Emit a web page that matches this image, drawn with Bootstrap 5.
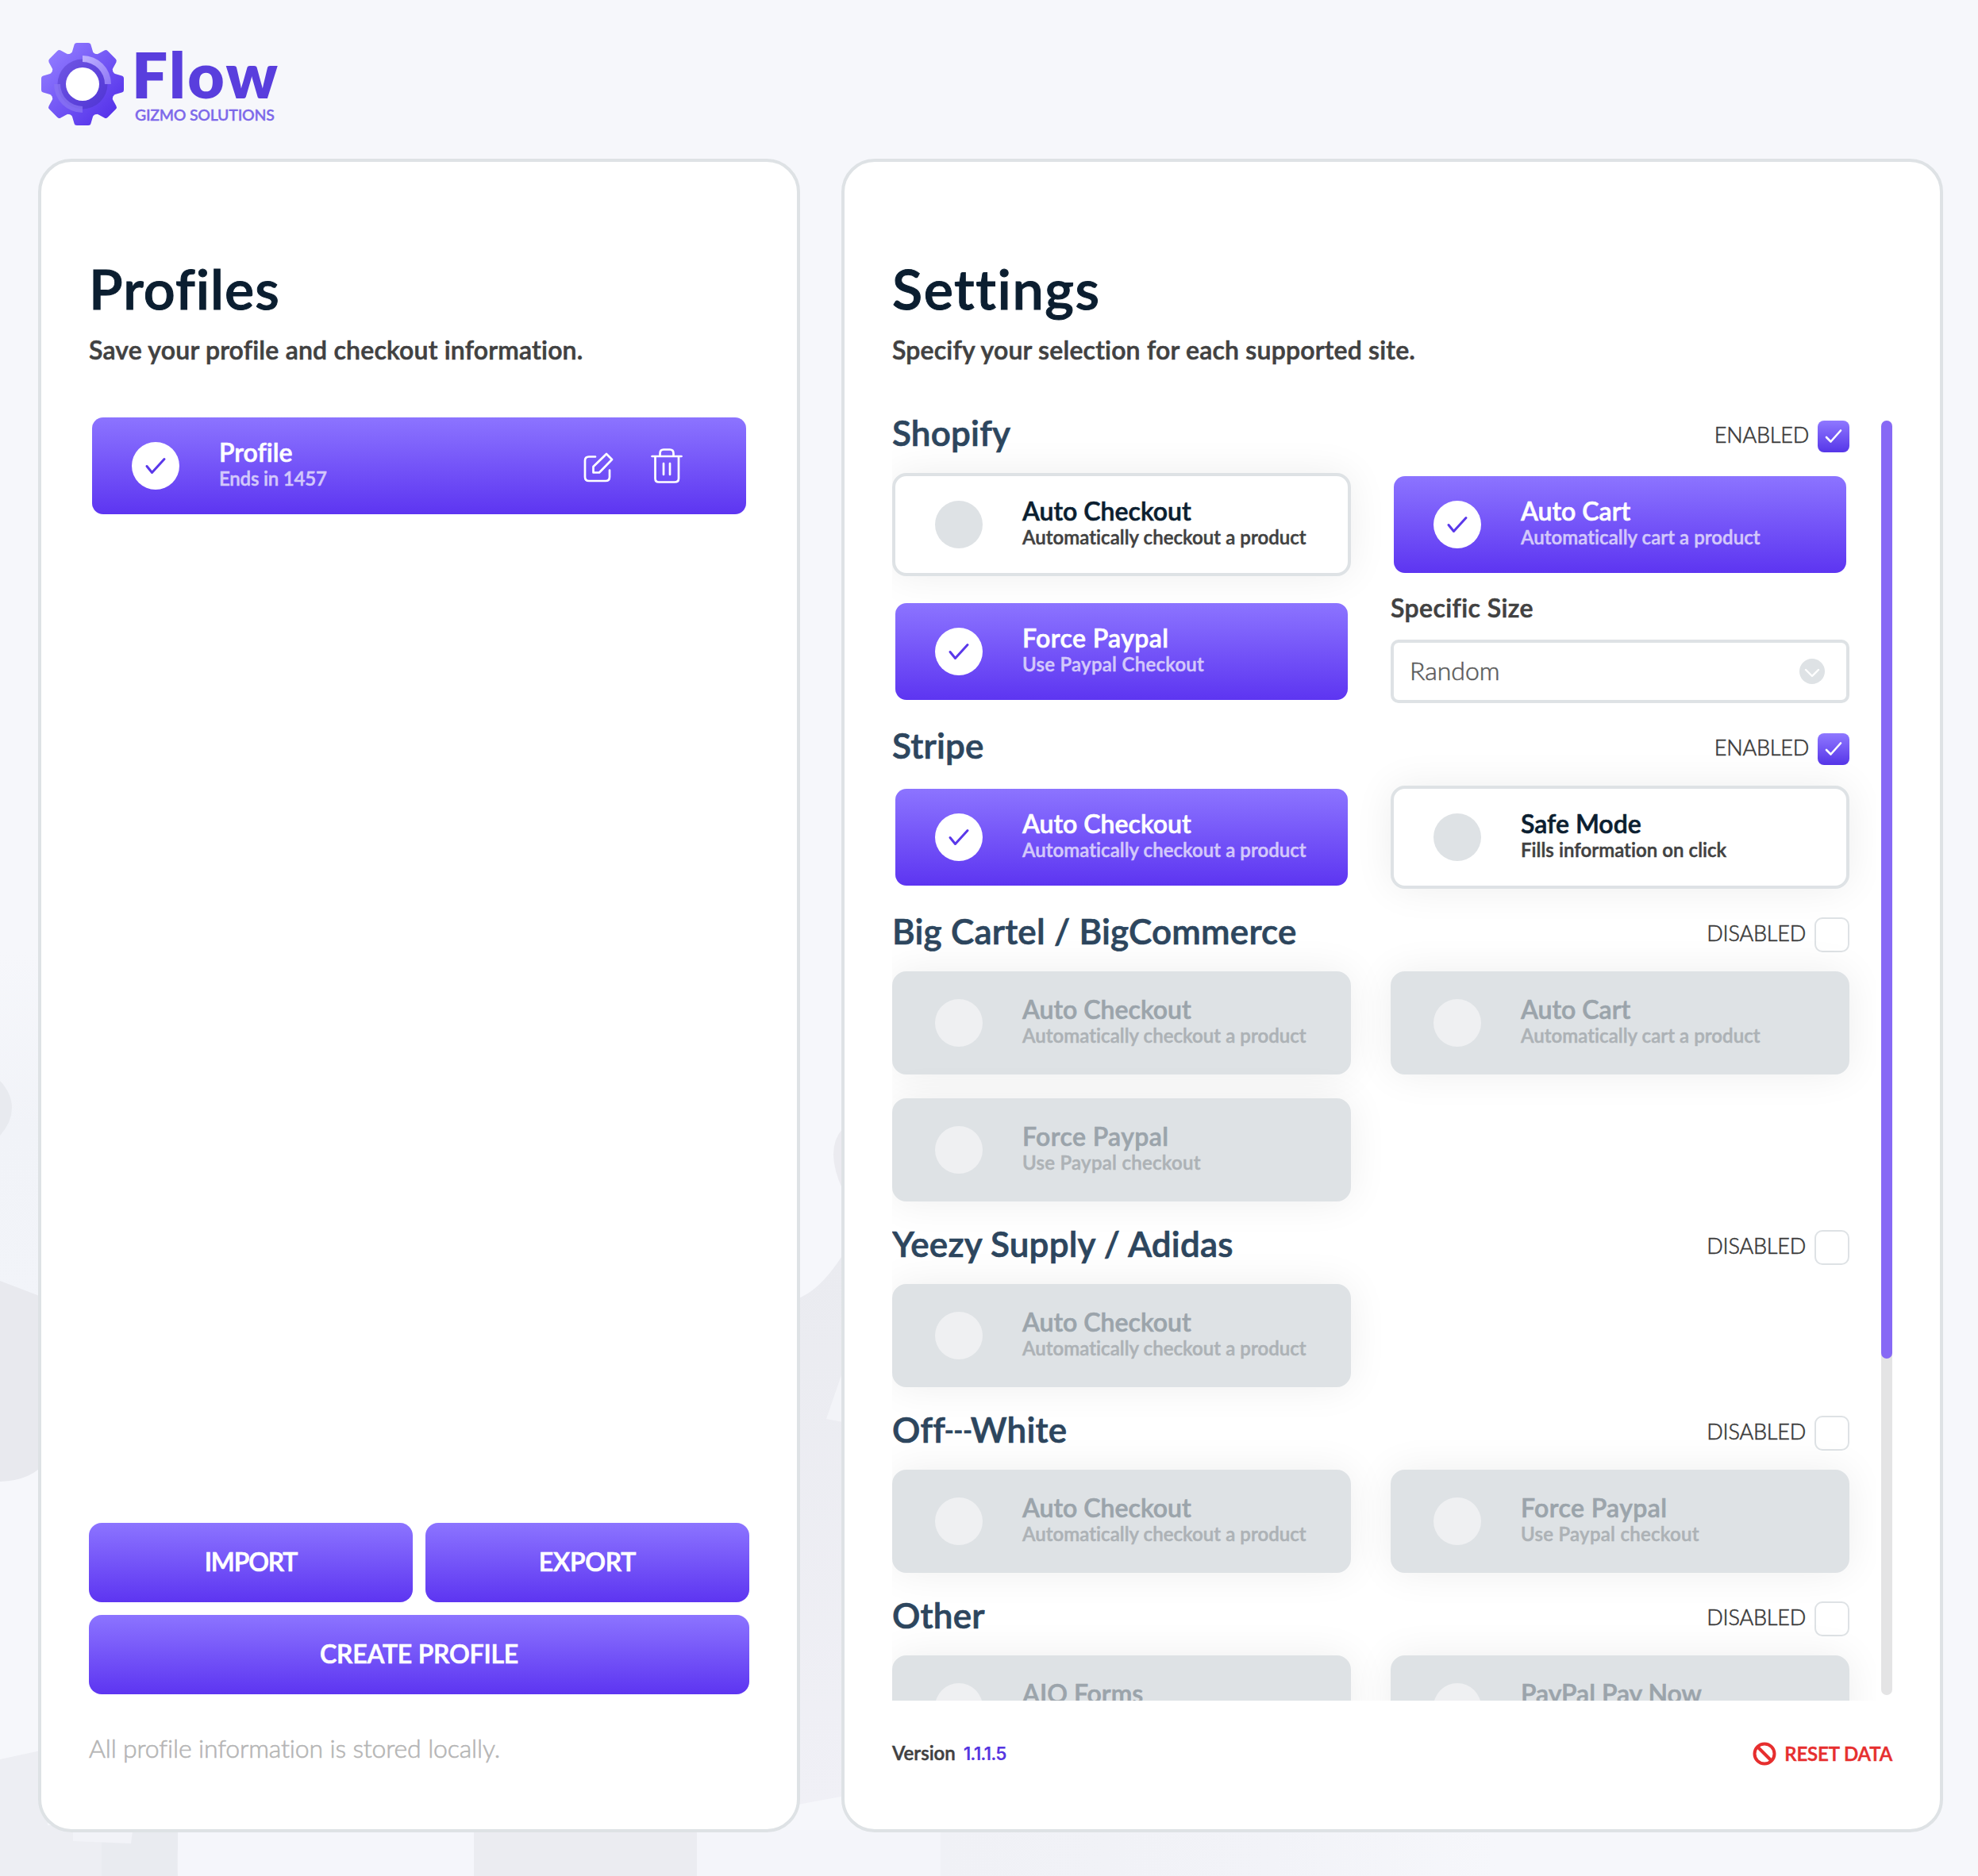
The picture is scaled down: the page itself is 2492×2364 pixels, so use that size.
<!DOCTYPE html>
<html lang="en">
<head>
<meta charset="utf-8">
<title>Flow</title>
<link href="https://cdn.jsdelivr.net/npm/bootstrap@5.3.0/dist/css/bootstrap.min.css" rel="stylesheet">
<style>
body{font-family:Lato,sans-serif;font-variant-ligatures:none;background:#f6f7fb;color:#414141;width:2492px;height:2364px;overflow:hidden;position:relative}
.backdrop{position:absolute;left:0;top:0;z-index:-1}
.brand-bar{height:200px;padding:50px 0 0 48px}
.gear{width:112px;height:112px}
.brand-name{font-size:80px;line-height:74px;font-weight:800;color:#593edd;letter-spacing:2.4px;margin:6px 0 0 6px}
.brand-sub{font-size:19.5px;line-height:20px;font-weight:600;color:#7d68ea;letter-spacing:-.25px;margin:5px 0 0 10px;-webkit-text-stroke:.3px #7d68ea}
.panels{padding:0 44px 0 48px;gap:52px}
.panel{background:#fff;border:4px solid #dee2e5;border-radius:42px;height:2109px;padding:0 60px}
.panel-l{width:960px}
.panel-r{width:1388px}
.panel-title{font-size:70px;line-height:72px;font-weight:600;color:#0b1e30;margin:123px 0 0;letter-spacing:1.6px;-webkit-text-stroke:1px}
.panel-l .panel-title{letter-spacing:1px}
.panel-text{font-size:32px;line-height:40px;font-weight:600;margin:22px 0 0;letter-spacing:.2px;-webkit-text-stroke:.6px}
.option{height:130px;border:4px solid #dee2e5;border-radius:18px;background:#fff;padding:0 50px 0 50px;box-shadow:0 0 50px rgba(0,0,0,.07);margin-bottom:30px;position:relative}
.option .dot{width:60px;height:60px;border-radius:50%;background:#dee2e5;flex:none;margin-right:50px}
.option .dot svg{display:block}
.option .copy{padding-bottom:5px;white-space:nowrap}
.option .name{font-size:32px;line-height:32px;font-weight:600;color:#0b1e30;-webkit-text-stroke:.6px}
.option .note{font-size:24px;line-height:24px;min-height:24px;font-weight:600;color:#414141;margin-top:5px;letter-spacing:.06px;-webkit-text-stroke:.5px}
.option.paypal .name{letter-spacing:.4px}
.option.paypal .note{letter-spacing:.28px}
.option.on{border-color:transparent;background:linear-gradient(#8c74ff,#5d35f1) padding-box;box-shadow:none}
.option.on .dot{background:#fff}
.option.on .name{color:#fff}
.option.on .note{color:#d3c8fb}
.option.off{background:#dee2e5}
.option.off .dot{background:#eff0f2}
.option.off .name{color:#9ba4ab}
.option.off .note{color:#adb2b6}
.profile-card{margin:61px 0 0}
.profile-card .note{letter-spacing:-.2px}
.profile-card .tools{gap:45px;padding-right:29px}
.grad-btn{height:100px;border:0;border-radius:16px;background:linear-gradient(#8c74ff,#5d35f1);color:#fff;font-size:32px;line-height:32px;font-weight:600;padding:0 0 3px;-webkit-text-stroke:.7px}
.grad-btn:hover{color:#fff}
.btn-stack{margin-top:1267px;gap:16px}
.tight{letter-spacing:-1.1px}
.snug{letter-spacing:-.2px}
.hint{font-size:32px;line-height:40px;font-weight:300;color:#b5b5b5;margin-top:48px;letter-spacing:-.15px;-webkit-text-stroke:.6px #b5b5b5}
.settings-view{height:1643px;margin:39px 0 0;overflow:hidden}
.scroll-body{width:1240px;height:1643px;overflow:hidden;padding:30px 34px 0 0}
.site{padding-bottom:8px}
.site-head{height:66px}
.site-name{font-size:44px;line-height:40px;font-weight:600;color:#2d465e;margin:-5px 0 0;letter-spacing:.2px;-webkit-text-stroke:.7px}
.dashes{display:inline-block;font-size:31px;font-weight:700;line-height:30px;letter-spacing:0;vertical-align:4px;margin:0 -2px 0 -1px}
.site-col{width:578px}
.site-cols{gap:50px}
.state{font-size:27px;line-height:28px;font-weight:300;color:#333;letter-spacing:-.2px;margin:4px 11px 0 0;-webkit-text-stroke:.6px #414141}
.tick{width:40px;height:40px;border-radius:8px;background:linear-gradient(#8f78ff,#5636e8)}
.tick svg{display:block}
.tick.empty{width:44px;height:44px;border:2px solid #dee2e5;border-radius:10px;background:#fff;margin-top:-2px}
.size-label{font-size:32px;line-height:32px;font-weight:600;letter-spacing:.4px;margin:-6px 0 24px;-webkit-text-stroke:.6px}
.size-box{height:80px;border:4px solid #dee2e5;border-radius:10px;background:#fff;font-size:32px;font-weight:300;color:#555;padding:0 27px 0 20px;-webkit-text-stroke:.6px #666}
.size-box span{margin-top:-3px}
.track{width:14px;height:1606px;margin-top:30px;border-radius:7px;background:#e4e4e5}
.thumb{height:1182px;border-radius:7px;background:#8769f5}
.foot{font-size:24px;line-height:30px;font-weight:600;margin-top:51px;-webkit-text-stroke:.5px}
.ver{font-family:Inter,sans-serif;font-size:22.5px;-webkit-text-stroke:0;color:#5636e0;letter-spacing:-.9px;margin-left:10px}
.reset{color:#e62e2e;letter-spacing:-.15px}
.reset svg{margin-right:10px}
</style>
</head>
<body>
<svg class="backdrop" width="2492" height="2364" viewBox="0 0 2492 2364">
<defs>
<linearGradient id="b1" x1="0" y1="0" x2="0" y2="1"><stop offset="0" stop-color="#f6f7fb"/><stop offset=".5" stop-color="#f1f3f8"/><stop offset="1" stop-color="#f2f4f9"/></linearGradient>
<linearGradient id="b2" x1="0" y1="0" x2="0" y2="1"><stop offset="0" stop-color="#eaebf0"/><stop offset="1" stop-color="#f0f0f6"/></linearGradient>
<linearGradient id="b3" x1="0" y1="0" x2="1" y2="0"><stop offset="0" stop-color="#f0f1f6"/><stop offset=".6" stop-color="#f2f3f8"/><stop offset="1" stop-color="#f6f7fb"/></linearGradient>
</defs>
<rect y="1200" width="60" height="450" fill="url(#b1)"/>
<path d="M0 1362Q15 1378 15 1396T0 1431Z" fill="#e8eaef"/>
<path d="M0 1614L60 1637V1840Q40 1866 0 1867Z" fill="#e8e9ee"/>
<path d="M0 2217L60 2204V2300H224V2364H0Z" fill="#edeef3"/>
<path d="M1000 1638Q1030 1630 1060 1584H1070V2262L1000 2275Z" fill="url(#b2)"/>
<path d="M1062 1422Q1038 1448 1062 1500Z" fill="#ebebf0"/>
<path d="M1062 1727L1041 1788L1062 1792Z" fill="#f3f4f8"/>
<path d="M128 2300H230Q220 2335 224 2364H128Z" fill="#e9ebf0"/>
<path d="M92 2300H168L165 2323L92 2320Z" fill="#f2f3f8"/>
<rect x="224" y="2300" width="373" height="64" fill="#f5f6fb"/>
<rect x="597" y="2300" width="281" height="64" fill="#ebecf1"/>
<rect x="878" y="2306" width="307" height="58" fill="#f4f5fa"/>
<rect x="1185" y="2300" width="700" height="64" fill="url(#b3)"/>
</svg>

<header class="brand-bar d-flex align-items-start">
<svg class="gear" viewBox="-56 -56 112 112">
<defs>
<linearGradient id="g" gradientUnits="userSpaceOnUse" x1="-38" y1="-38" x2="38" y2="38"><stop offset="0" stop-color="#8f79ff"/><stop offset="1" stop-color="#5633ea"/></linearGradient>
<linearGradient id="r" x1="0" y1="0" x2="1" y2="1"><stop offset="0" stop-color="#7057e4"/><stop offset="1" stop-color="#4f34d4"/></linearGradient>
<linearGradient id="a" x1="0" y1="0" x2="1" y2="1"><stop offset="0" stop-color="#c0b2ff"/><stop offset="1" stop-color="#8f78f6"/></linearGradient>
<path id="t" d="M-18-28V-38Q-14-38-13-41L-10.5-49.500Q-10-52-7-52H7Q10-52 10.500-49.500L13-41Q14-38 18-38V-28Z"/>
<clipPath id="c"><circle r="40.500"/><use href="#t"/><use href="#t" transform="rotate(45)"/><use href="#t" transform="rotate(90)"/><use href="#t" transform="rotate(135)"/><use href="#t" transform="rotate(180)"/><use href="#t" transform="rotate(225)"/><use href="#t" transform="rotate(270)"/><use href="#t" transform="rotate(315)"/></clipPath>
</defs>
<rect x="-56" y="-56" width="112" height="112" fill="url(#g)" clip-path="url(#c)"/>
<circle r="31.500" fill="url(#r)"/>
<path d="M0-36A36 36 0 0 1 36 0H28A28 28 0 0 0 0-28Z" fill="url(#a)"/>
<path d="M0 36A36 36 0 0 1-36 0H-28A28 28 0 0 0 0 28Z" fill="#8a74f3" opacity=".75"/>
<circle r="21" fill="#fff"/>
</svg>
<div><div class="brand-name">Flow</div><div class="brand-sub">GIZMO SOLUTIONS</div></div>
</header>

<main class="panels d-flex">
<section class="panel panel-l">
<h1 class="panel-title">Profiles</h1>
<p class="panel-text">Save your profile and checkout information.</p>
<div class="option on profile-card d-flex align-items-center">
<div class="dot"><svg width="60" height="60" viewBox="-30 -30 60 60" fill="none" stroke="#5a38ea" stroke-width="3" stroke-linecap="round" stroke-linejoin="round"><path d="M-11 .5L-4.500 8.500L11-8.500"/></svg></div>
<div class="copy"><div class="name">Profile</div><div class="note">Ends in 1457</div></div>
<div class="tools d-flex align-items-center ms-auto">
<svg width="40" height="44" viewBox="14 8 40 44" fill="none" stroke="#fff" stroke-width="2.700" stroke-linecap="round" stroke-linejoin="round"><path d="M30 18.500H22Q17 18.500 17 23.500V44Q17 49 22 49H43Q48 49 48 44V35.500M44 15L51 22L35 38.500H27.500V31Z"/></svg>
<svg width="42" height="48" viewBox="99 8 42 48" fill="none" stroke="#fff" stroke-width="2.700" stroke-linecap="round" stroke-linejoin="round"><path d="M101.500 20H138.500M111.500 20V16.500Q111.500 11.500 116 11.500H124Q128.500 11.500 128.500 16.500V20M105.500 20V48Q105.500 52.500 110 52.500H130Q135 52.500 135 48V20M116 29V43M124 29V43"/></svg>
</div>
</div>
<div class="btn-stack d-flex flex-column">
<div class="d-flex gap-3"><button class="btn grad-btn flex-fill w-50 tight">IMPORT</button><button class="btn grad-btn flex-fill w-50 snug">EXPORT</button></div>
<button class="btn grad-btn w-100 snug">CREATE PROFILE</button>
</div>
<p class="hint">All profile information is stored locally.</p>
</section>

<section class="panel panel-r">
<h1 class="panel-title">Settings</h1>
<p class="panel-text">Specify your selection for each supported site.</p>
<div class="settings-view d-flex justify-content-between">
<div class="scroll-body" id="sites"></div>
<div class="track"><div class="thumb"></div></div>
</div>
<div class="foot d-flex justify-content-between">
<div>Version<span class="ver">1.1.1.5</span></div>
<div class="reset d-flex align-items-center"><svg width="30" height="30" viewBox="0 0 30 30" fill="none" stroke="#e62e2e" stroke-width="4"><circle cx="15" cy="15" r="12.500"/><path d="M6.500 6.500L23.500 23.500"/></svg>RESET DATA</div>
</div>
</section>
</main>

<script>
const check = '<svg width="60" height="60" viewBox="-30 -30 60 60" fill="none" stroke="#5a38ea" stroke-width="3" stroke-linecap="round" stroke-linejoin="round"><path d="M-11 .5L-4.500 8.500L11-8.500"/></svg>';
const option = (name, note, state) => `<div class="option ${state} d-flex align-items-center"><div class="dot">${state.startsWith('on') ? check : ''}</div><div class="copy"><div class="name">${name}</div><div class="note">${note}</div></div></div>`;
const tick = '<div class="tick"><svg width="40" height="40" viewBox="-20 -20 40 40" fill="none" stroke="#fff" stroke-width="2.600" stroke-linecap="round" stroke-linejoin="round"><path d="M-9 1L-3.500 6.500L9-7.500"/></svg></div>';
const sizePicker = '<div class="size-label">Specific Size</div><div class="size-box d-flex align-items-center justify-content-between"><span>Random</span><svg width="32" height="32" viewBox="-16 -16 32 32"><circle r="16" fill="#dee2e5"/><path d="M-8-2L0 6L8-2" fill="none" stroke="#fff" stroke-width="2.400" stroke-linecap="round" stroke-linejoin="round"/></svg></div>';
const site = (title, enabled, left, right) => `<section class="site"><div class="site-head d-flex align-items-start"><h2 class="site-name me-auto">${title}</h2><span class="state">${enabled ? 'ENABLED' : 'DISABLED'}</span>${enabled ? tick : '<div class="tick empty"></div>'}</div><div class="site-cols d-flex"><div class="site-col">${left}</div><div class="site-col">${right}</div></div></section>`;
const ac = 'Automatically checkout a product';
document.getElementById('sites').innerHTML =
  site('Shopify', true, option('Auto Checkout', ac, '') + option('Force Paypal', 'Use Paypal Checkout', 'on paypal'), option('Auto Cart', 'Automatically cart a product', 'on') + sizePicker) +
  site('Stripe', true, option('Auto Checkout', ac, 'on'), option('Safe Mode', 'Fills information on click', '')) +
  site('Big Cartel / BigCommerce', false, option('Auto Checkout', ac, 'off') + option('Force Paypal', 'Use Paypal checkout', 'off paypal'), option('Auto Cart', 'Automatically cart a product', 'off')) +
  site('Yeezy Supply / Adidas', false, option('Auto Checkout', ac, 'off'), '') +
  site('Off<span class="dashes">---</span>White', false, option('Auto Checkout', ac, 'off'), option('Force Paypal', 'Use Paypal checkout', 'off paypal')) +
  site('Other', false, option('AIO Forms', '', 'off'), option('PayPal Pay Now', '', 'off'));
</script>
<script src="https://cdn.jsdelivr.net/npm/bootstrap@5.3.0/dist/js/bootstrap.bundle.min.js"></script>
</body>
</html>
